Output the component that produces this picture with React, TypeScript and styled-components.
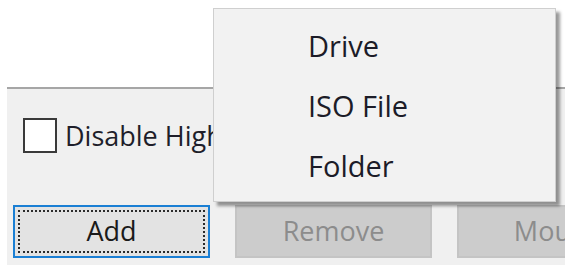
import React from "react";
import styled, { createGlobalStyle } from "styled-components";

const Global = createGlobalStyle`
  html, body { margin: 0; padding: 0; background: #ffffff; }
  body { font-family: "Open Sans", "Liberation Sans", sans-serif; }
`;

const Screen = styled.div`
  position: relative;
  width: 565px;
  height: 265px;
  overflow: hidden;
  background: #ffffff;
  display: flex;
  flex-direction: column;
`;

const TopArea = styled.div`
  height: 87px;
  flex: none;
  background: #ffffff;
`;

const Panel = styled.div`
  margin-left: 7px;
  flex: 1;
  border-top: 2px solid #a6a6a6;
  background: #f0f0f0;
  padding: 29px 0 0 6px;
  display: flex;
  flex-direction: column;
`;

const CheckRow = styled.label`
  display: flex;
  align-items: center;
  gap: 8px;
  margin-left: 10px;
  width: 190px;
  overflow: hidden;
  height: 35px;
  font-size: 27px;
  font-weight: 500;
  color: #1e1e2a;
  white-space: nowrap;
`;

const Box = styled.span`
  width: 30px;
  height: 31px;
  border: 2px solid #3a3a3a;
  background: #ffffff;
  flex: none;
`;

const ButtonRow = styled.div`
  display: flex;
  gap: 25px;
  margin-top: 52px;
`;

const Button = styled.div<{ $focused?: boolean; $disabled?: boolean }>`
  position: relative;
  flex: none;
  width: 197px;
  height: 53px;
  box-sizing: border-box;
  display: flex;
  align-items: center;
  justify-content: center;
  font-size: 27px;
  padding-bottom: 2px;
  background: ${(p) => (p.$disabled ? "#cccccc" : "#e3e3e3")};
  border: 2px solid ${(p) => (p.$focused ? "#1a7fd4" : p.$disabled ? "#c4c4c4" : "#adadad")};
  color: ${(p) => (p.$disabled ? "#8c8c8c" : "#1a1a1a")};
  ${(p) =>
    p.$focused
      ? `&::after {
    content: "";
    position: absolute;
    inset: 3px;
    border: 2px dotted #2b2b2b;
  }`
      : ""}
`;

const Menu = styled.div`
  position: absolute;
  left: 213px;
  top: 8px;
  width: 343px;
  height: 194px;
  box-sizing: border-box;
  background: #f2f2f2;
  border: 1px solid #cfcfcf;
  box-shadow: 4px 4px 3px rgba(0, 0, 0, 0.4);
  padding: 6px 0;
  display: flex;
  flex-direction: column;
`;

const MenuItem = styled.div`
  height: 60px;
  display: flex;
  align-items: center;
  padding-left: 94px;
  font-size: 29px;
  font-weight: 500;
  color: #1c1c28;
`;

export default function App() {
  return (
    <Screen>
      <Global />
      <TopArea />
      <Panel>
        <CheckRow>
          <Box />
          Disable High DPI Scaling
        </CheckRow>
        <ButtonRow>
          <Button $focused>Add</Button>
          <Button $disabled>Remove</Button>
          <Button $disabled>Mount</Button>
        </ButtonRow>
      </Panel>
      <Menu>
        <MenuItem>Drive</MenuItem>
        <MenuItem>ISO File</MenuItem>
        <MenuItem>Folder</MenuItem>
      </Menu>
    </Screen>
  );
}
